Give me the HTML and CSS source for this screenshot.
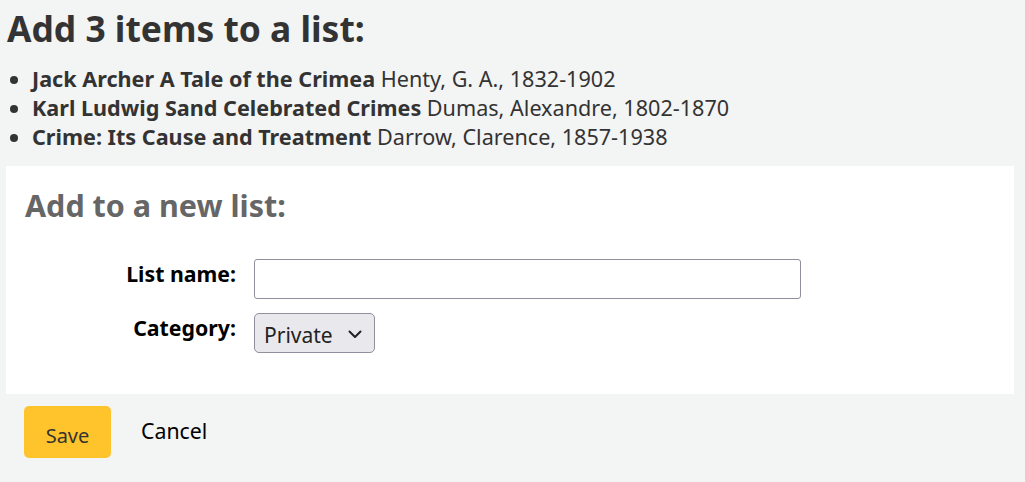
FILE: index.html
```html
<!DOCTYPE html>
<html lang="en">
<head>
<meta charset="utf-8">
<title>Add to list</title>
<link rel="stylesheet" href="styles.css">
</head>
<body>
<main class="page">
  <h1 class="title">Add 3 items to a list:</h1>
  <ul class="items">
    <li><strong>Jack Archer A Tale of the Crimea</strong> Henty, G. A., 1832-1902</li>
    <li><strong>Karl Ludwig Sand Celebrated Crimes</strong> Dumas, Alexandre, 1802-1870</li>
    <li><strong>Crime: Its Cause and Treatment</strong> Darrow, Clarence, 1857-1938</li>
  </ul>
  <form class="panel">
    <h2 class="panel-title">Add to a new list:</h2>
    <div class="fields">
      <div class="row">
        <label class="label" for="name">List name:</label>
        <input class="text-input" id="name" type="text">
      </div>
      <div class="row">
        <label class="label" for="cat">Category:</label>
        <div class="select">
          <span class="select-value">Private</span>
          <svg class="chev" width="14" height="9" viewBox="0 0 14 9"><path d="M1.5 1.5 L7 7 L12.5 1.5" fill="none" stroke="#222" stroke-width="2" stroke-linecap="round" stroke-linejoin="round"/></svg>
        </div>
      </div>
    </div>
  </form>
  <div class="actions">
    <button class="save" type="button">Save</button>
    <a class="cancel" href="#">Cancel</a>
  </div>
</main>
</body>
</html>
```
FILE: styles.css
```css
html, body {
  margin: 0;
  padding: 0;
  background: #f3f4f4;
}
body {
  font-family: "Noto Sans", "Open Sans", sans-serif;
  color: #333;
}
.page {
  padding: 0 11px 0 6px;
}
.title {
  margin: 0;
  padding: 7px 0 0 1px;
  font-size: 35.4px;
  line-height: 42px;
  font-weight: 700;
  color: #333;
}
.items {
  margin: 15px 0 0 0;
  padding: 0 0 0 26px;
  font-size: 21.6px;
  line-height: 29px;
  color: #333;
}
.items strong {
  font-weight: 700;
}
.panel {
  margin-top: 15px;
  background: #fff;
  padding: 19px 19px 40px;
  height: 228px;
  box-sizing: border-box;
}
.panel-title {
  margin: 0;
  font-size: 30.5px;
  line-height: 40px;
  font-weight: 700;
  color: #666;
}
.fields {
  margin-top: 34px;
  display: flex;
  flex-direction: column;
  gap: 14px;
}
.row {
  display: flex;
  align-items: flex-start;
  gap: 18px;
}
.label {
  width: 211px;
  text-align: right;
  font-weight: 700;
  font-size: 21.3px;
  line-height: 30px;
  color: #000;
  padding-top: 0;
}
.text-input {
  width: 547px;
  height: 40px;
  box-sizing: border-box;
  border: 1px solid #8f8f9d;
  border-radius: 3px;
  background: #fff;
  margin: 0;
}
.select {
  width: 121px;
  height: 40px;
  box-sizing: border-box;
  border: 1px solid #8f8f9d;
  border-radius: 5px;
  background: #e9e9ed;
  display: flex;
  align-items: center;
  justify-content: space-between;
  padding: 3px 12px 0 9px;
  font-size: 21px;
  color: #222;
}
.actions {
  display: flex;
  align-items: center;
  gap: 30px;
  padding: 12px 0 0 18px;
}
.save {
  width: 87px;
  height: 52px;
  border: none;
  border-radius: 5px;
  background: #ffc32b;
  font-family: inherit;
  font-size: 20px;
  color: #333;
  padding: 6px 0 0;
}
.cancel {
  font-size: 21.3px;
  color: #000;
  text-decoration: none;
  margin-top: -4px;
}
```
